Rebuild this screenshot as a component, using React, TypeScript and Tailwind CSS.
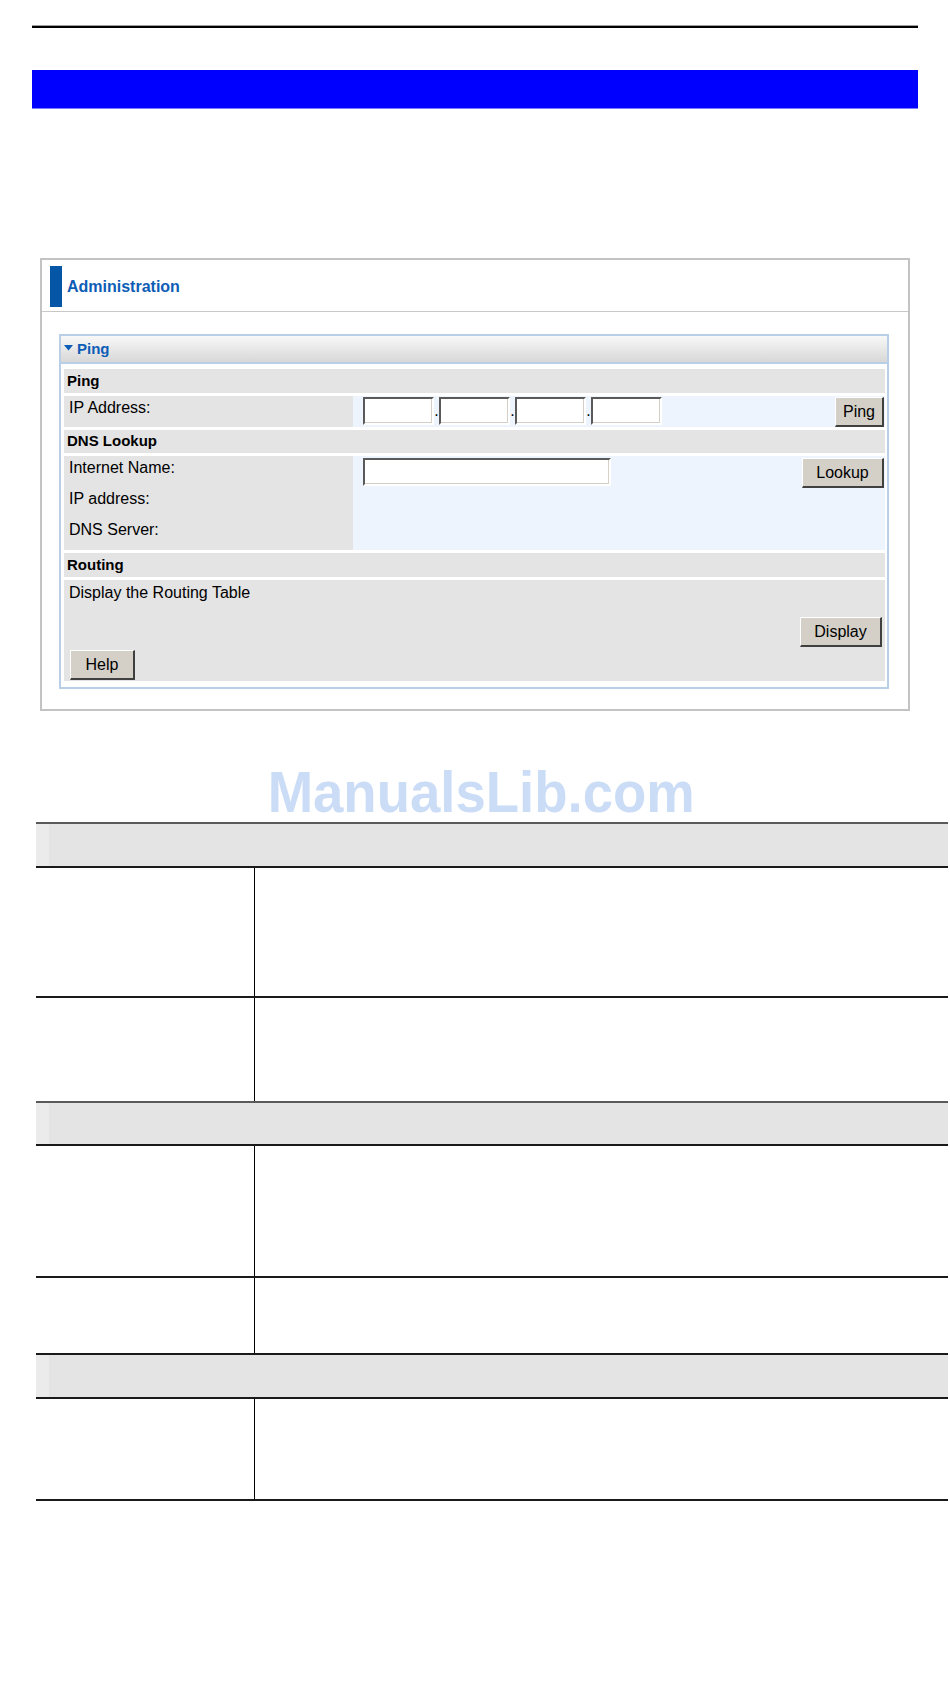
import React from "react";

function Btn({ children, className = "" }: { children: React.ReactNode; className?: string }) {
  return (
    <button
      type="button"
      className={
        "h-[30px] bg-[#d4d0c8] border-t border-l border-t-white border-l-white border-r-2 border-b-2 border-r-[#404040] border-b-[#404040] text-[16px] leading-none text-black flex items-center justify-center " +
        className
      }
    >
      {children}
    </button>
  );
}

function Field({ className = "" }: { className?: string }) {
  return (
    <input
      type="text"
      readOnly
      className={
        "h-[28px] bg-white border-2 border-t-[#5a5a5a] border-l-[#5a5a5a] border-r-white border-b-white shadow-[inset_-1px_-1px_0_#d4d0c8] outline-none " +
        className
      }
    />
  );
}

function Section({ children, h }: { children: React.ReactNode; h: string }) {
  return (
    <div className={"bg-[#e4e4e4] flex items-center pl-[3px] text-[15px] font-bold text-black " + h}>
      {children}
    </div>
  );
}

function Dot() {
  return <span className="w-[5px] h-[28px] text-center text-[16px] leading-[28px]">.</span>;
}

function TableHeader({ h, top }: { h: string; top: string }) {
  return (
    <div className={"border-t-2 bg-[#e4e4e4] flex " + h + " " + top}>
      <div className="w-[13px] h-full bg-[#ebebeb]" />
    </div>
  );
}

function TableRow({ h, last = false }: { h: string; last?: boolean }) {
  return (
    <div className={"border-t-2 border-t-[#1a1a1a] flex " + h + (last ? " border-b-2 border-b-[#1a1a1a]" : "")}>
      <div className="w-[219px] h-full border-r border-r-black" />
      <div className="flex-1" />
    </div>
  );
}

export default function App() {
  return (
    <div className="w-[950px] h-[1692px] bg-white overflow-hidden font-['Liberation_Sans',Arial,sans-serif] text-black">
      {/* top rule */}
      <div className="ml-[32px] w-[886px] pt-[25px]">
        <div className="h-[1px] bg-[#a0a0a0]" />
        <div className="h-[2px] bg-black" />
      </div>

      {/* blue title bar */}
      <div className="ml-[32px] w-[886px] mt-[42px] h-[39px] bg-[#0000ff] border-b border-b-[#7a7aff]" />

      {/* Administration screen */}
      <div className="ml-[40px] w-[870px] mt-[149px] border-2 border-[#c3c3c3]">
        <div className="h-[52px] pt-[6px] pl-[8px] flex items-start border-b border-b-[#c8c8c8]">
          <div className="w-[12px] h-[41px] bg-[#0656a8]" />
          <div className="ml-[5px] h-[41px] flex items-center text-[16px] font-bold text-[#0d5db6]">
            Administration
          </div>
        </div>

        <div className="pt-[22px] pl-[17px] pr-[19px] pb-[20px]">
          <div className="border-2 border-[#b9cfe8]">
            <div className="h-[28px] border-b-2 border-b-[#b9cfe8] bg-linear-to-b from-[#f8f8f8] to-[#d8d8d8] flex items-center pl-[3px]">
              <svg width="9" height="6" viewBox="0 0 9 6" className="mr-[4px] -mt-[3px]">
                <path d="M0 0H9L4.5 5.5Z" fill="#0d5db6" />
              </svg>
              <span className="text-[15px] font-bold text-[#0d5db6]">Ping</span>
            </div>

            <div className="pt-[5px] pl-[3px] pr-[2px] pb-[6px] flex flex-col gap-[3px]">
              <Section h="h-[24px]">Ping</Section>

              <div className="h-[31px] flex">
                <div className="w-[289px] bg-[#e4e4e4] pl-[5px] pt-[2px] text-[16px] leading-[20px]">
                  IP Address:
                </div>
                <div className="flex-1 bg-[#edf4fd] flex items-start justify-between pt-[1px] pl-[10px] pr-[1px]">
                  <div className="flex items-start">
                    <Field className="w-[71px]" />
                    <Dot />
                    <Field className="w-[71px]" />
                    <Dot />
                    <Field className="w-[71px]" />
                    <Dot />
                    <Field className="w-[71px]" />
                  </div>
                  <Btn className="w-[49px]">Ping</Btn>
                </div>
              </div>

              <Section h="h-[23px]">DNS Lookup</Section>

              <div className="h-[94px] flex">
                <div className="w-[289px] bg-[#e4e4e4] pl-[5px] pt-[2px] text-[16px] leading-[20px]">
                  <div className="h-[31px]">Internet Name:</div>
                  <div className="h-[31px]">IP address:</div>
                  <div className="h-[31px]">DNS Server:</div>
                </div>
                <div className="flex-1 bg-[#edf4fd] flex items-start justify-between pt-[2px] pl-[10px] pr-[1px]">
                  <Field className="w-[248px]" />
                  <Btn className="w-[82px]">Lookup</Btn>
                </div>
              </div>

              <Section h="h-[24px]">Routing</Section>

              <div className="h-[101px] bg-[#e4e4e4] flex flex-col pt-[3px]">
                <div className="pl-[5px] text-[16px] leading-[20px]">Display the Routing Table</div>
                <div className="flex justify-end pr-[3px] mt-[14px]">
                  <Btn className="w-[82px]">Display</Btn>
                </div>
                <div className="pl-[6px] mt-[3px] flex">
                  <Btn className="w-[65px]">Help</Btn>
                </div>
              </div>
            </div>
          </div>
        </div>
      </div>

      {/* watermark */}
      <div className="mt-[52px] h-[58px] pl-[13px] text-center text-[58px] leading-none font-bold text-[#cadcf6]">
        <span className="inline-block scale-x-[0.94]">ManualsLib.com</span>
      </div>

      {/* table */}
      <div className="ml-[36px] w-[912px] mt-[1px]">
        <TableHeader h="h-[44px]" top="border-t-[#5a5a5a]" />
        <TableRow h="h-[130px]" />
        <TableRow h="h-[105px]" />
        <TableHeader h="h-[43px]" top="border-t-[#5a5a5a]" />
        <TableRow h="h-[132px]" />
        <TableRow h="h-[77px]" />
        <TableHeader h="h-[44px]" top="border-t-[#1a1a1a]" />
        <TableRow h="h-[104px]" last />
      </div>
    </div>
  );
}
